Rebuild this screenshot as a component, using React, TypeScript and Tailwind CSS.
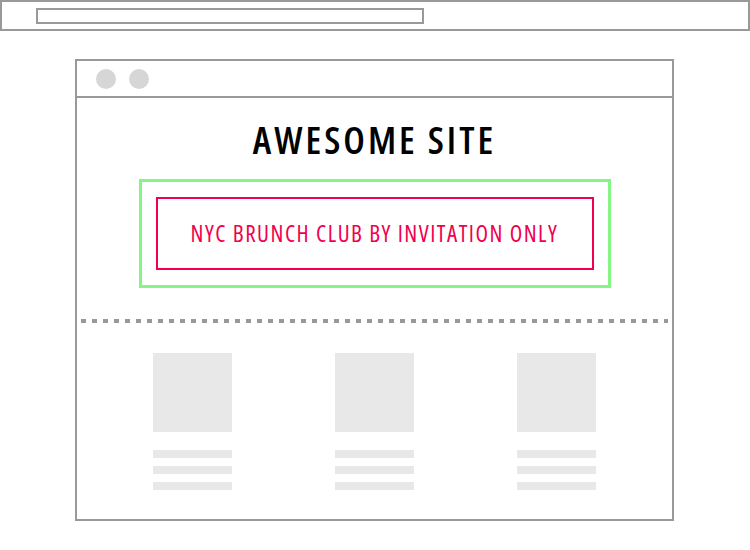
const Card = () => {
    return (
        <div className="w-[79px] flex flex-col">
            <div className="w-[79px] h-[79px] bg-[#e8e8e8]" />
            <div className="mt-[18px] flex flex-col gap-[8px]">
                <div className="h-[8px] bg-[#e8e8e8]" />
                <div className="h-[8px] bg-[#e8e8e8]" />
                <div className="h-[8px] bg-[#e8e8e8]" />
            </div>
        </div>
    )
}

export default function App() {
    return (
        <div className="w-[750px] h-[550px] bg-white font-['Open_Sans',sans-serif]">
            {/* address bar */}
            <div className="h-[31px] border-2 border-[#999] pl-[34px] pt-[6px]">
                <div className="w-[388px] h-[16px] border-2 border-[#999]" />
            </div>

            {/* browser window */}
            <div className="ml-[75px] mt-[28px] w-[599px] h-[462px] border-2 border-[#999] flex flex-col">
                <div className="h-[37px] border-b-2 border-[#999] flex items-center gap-[13px] pl-[19px]">
                    <div className="w-[20px] h-[20px] rounded-full bg-[#d6d6d6]" />
                    <div className="w-[20px] h-[20px] rounded-full bg-[#d6d6d6]" />
                </div>

                <h1 className="pt-[22px] text-center text-[38px] leading-[38px] font-[560] font-stretch-semi-condensed tracking-[3px] text-black">
                    AWESOME SITE
                </h1>

                <div className="mt-[21px] mx-auto border-[3px] border-[#85f585] px-[14px] py-[15px]">
                    <div className="w-[438px] h-[73px] border-2 border-[#f0004f] flex items-center justify-center text-[23px] font-normal font-stretch-condensed tracking-[1.5px] text-[#f0004f]">
                        NYC BRUNCH CLUB BY INVITATION ONLY
                    </div>
                </div>

                <div className="mt-[31px] mx-[4px] h-[4px] bg-[repeating-linear-gradient(90deg,#999_0_5px,transparent_5px_11px)]" />

                <div className="mt-[30px] flex justify-center gap-[103px]">
                    <Card />
                    <Card />
                    <Card />
                </div>
            </div>
        </div>
    )
}
